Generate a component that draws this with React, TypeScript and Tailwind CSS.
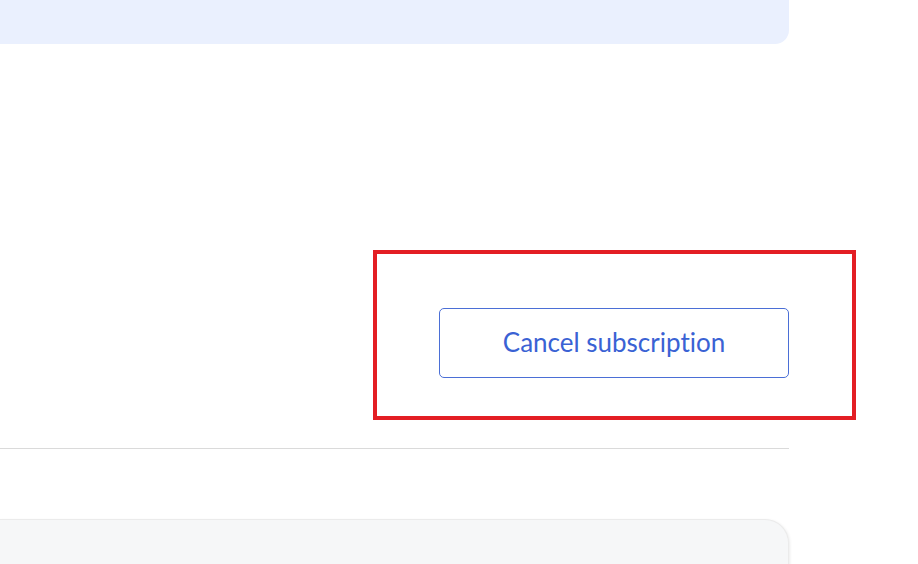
import React from "react";

export default function App() {
  return (
    <div className="relative w-[918px] h-[564px] overflow-hidden bg-white" style={{ fontFamily: "Lato, 'Noto Sans', sans-serif" }}>
      <div className="w-[789px] flex flex-col">
        <div className="h-[44px] bg-[#eaf0fe] rounded-br-[14px]" />
        <div className="flex justify-end pt-[264px]">
          <button className="w-[350px] h-[70px] rounded-[5px] border border-[#4b6fd6] bg-white text-[#3a62d4] text-[26px] [font-variant-ligatures:none] flex items-center justify-center pb-[1px]">
            Cancel subscription
          </button>
        </div>
        <div className="mt-[70px] h-px bg-[#dadada]" />
        <div className="mt-[70px] h-[80px] bg-[#f6f7f8] border border-[#ebebeb] border-l-0 rounded-tr-[24px] shadow-[1px_1px_3px_rgba(0,0,0,0.08)]" />
      </div>
      <div className="absolute left-[373px] top-[250px] w-[483px] h-[170px] border-4 border-[#e31e24]" />
    </div>
  );
}
